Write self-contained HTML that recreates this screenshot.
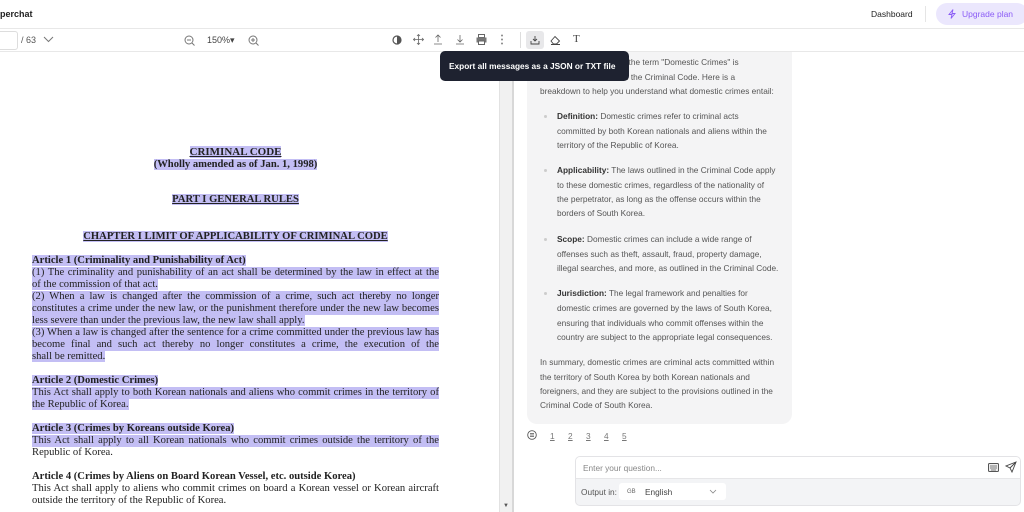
<!DOCTYPE html>
<html><head><meta charset="utf-8"><style>
*{margin:0;padding:0;box-sizing:border-box}
body{width:1024px;height:512px;overflow:hidden;background:#fff;font-family:"Liberation Sans",sans-serif;position:relative}
.a{position:absolute;white-space:nowrap}
.pl{position:absolute;left:32px;width:407px;font-family:"Liberation Serif",serif;font-size:10.6px;line-height:12px;height:12px;color:#222;white-space:nowrap;overflow:visible}
.j{text-align:justify;text-align-last:justify;white-space:normal}
.h{background:#c3bef4}
.c{position:absolute;font-size:8.3px;color:#555;line-height:12px;white-space:nowrap}
.c b{color:#333}
.dot{position:absolute;left:544px;width:3px;height:3px;border-radius:50%;background:#ccc}
svg{position:absolute}
</style></head><body>
<div class="a" style="left:0;top:9px;font-size:9px;font-weight:bold;color:#222">perchat</div>
<div class="a" style="left:871px;top:9px;font-size:8.5px;color:#222">Dashboard</div>
<div class="a" style="left:925px;top:6px;width:1px;height:16px;background:#e5e5e5"></div>
<div class="a" style="left:936px;top:3px;width:92px;height:22px;border-radius:11px;background:#ebe7fd"></div>
<div class="a" style="left:962px;top:9px;font-size:8.5px;color:#8b5cf6">Upgrade plan</div>
<svg style="left:947px;top:9px" width="10" height="10" viewBox="0 0 10 10"><path d="M6 0.5 L2 5.5 H5 L4 9.5 L8 4.5 H5 Z" fill="none" stroke="#8b5cf6" stroke-width="0.9"/></svg>
<div class="a" style="left:0;top:28px;width:1024px;height:1px;background:#e8e8e8"></div>
<div class="a" style="left:-4px;top:31px;width:22px;height:19px;border:1px solid #ddd;border-radius:3px"></div>
<div class="a" style="left:21px;top:35px;font-size:9px;color:#555">/ 63</div>
<svg style="left:43px;top:36px" width="11" height="7"><path d="M1 1 L5.5 5.5 L10 1" fill="none" stroke="#777"/></svg>
<svg style="left:184px;top:35px" width="11" height="11"><circle cx="5" cy="5" r="4" fill="none" stroke="#777"/><path d="M3 5H7M8 8L10.5 10.5" stroke="#777"/></svg>
<div class="a" style="left:207px;top:35px;font-size:9px;color:#444">150%▾</div>
<svg style="left:248px;top:35px" width="11" height="11"><circle cx="5" cy="5" r="4" fill="none" stroke="#777"/><path d="M3 5H7M5 3V7M8 8L10.5 10.5" stroke="#777"/></svg>
<svg style="left:392px;top:35px" width="10" height="10"><circle cx="5" cy="5" r="4" fill="none" stroke="#555" stroke-width="1.2"/><path d="M5 1A4 4 0 0 1 5 9Z" fill="#555"/></svg>
<svg style="left:413px;top:34px" width="11" height="11"><path d="M5.5 0.5V10.5M0.5 5.5H10.5M4 2L5.5 0.5 7 2M4 9L5.5 10.5 7 9M2 4L0.5 5.5 2 7M9 4L10.5 5.5 9 7" fill="none" stroke="#666" stroke-width="0.8"/></svg>
<svg style="left:433px;top:34px" width="10" height="11"><path d="M5 8V1M2.5 3.5L5 1 7.5 3.5M1 10H9" fill="none" stroke="#666" stroke-width="0.8"/></svg>
<svg style="left:455px;top:34px" width="10" height="11"><path d="M5 1V8M2.5 5.5L5 8 7.5 5.5M1 10H9" fill="none" stroke="#666" stroke-width="0.8"/></svg>
<svg style="left:476px;top:34px" width="11" height="11"><rect x="2.5" y="0.5" width="6" height="3" fill="none" stroke="#666"/><rect x="0.5" y="3.5" width="10" height="5" fill="#777"/><rect x="2.5" y="7" width="6" height="3.5" fill="#fff" stroke="#666"/></svg>
<svg style="left:500px;top:34px" width="4" height="11"><circle cx="2" cy="1.5" r="1" fill="#888"/><circle cx="2" cy="5.5" r="1" fill="#888"/><circle cx="2" cy="9.5" r="1" fill="#888"/></svg>
<div class="a" style="left:520px;top:32px;width:1px;height:16px;background:#ddd"></div>
<div class="a" style="left:526px;top:31px;width:18px;height:18px;border-radius:3px;background:#e8e8ea"></div>
<svg style="left:530px;top:35px" width="10" height="10"><path d="M5 1V6M3 4L5 6 7 4M1 6V9H9V6" fill="none" stroke="#444" stroke-width="0.9"/></svg>
<svg style="left:550px;top:35px" width="11" height="10"><path d="M1 6L5 1.5 9.5 6 6.5 9H3.5Z M1 9.5H10" fill="none" stroke="#444" stroke-width="0.9"/></svg>
<div class="a" style="left:573px;top:33px;font-family:'Liberation Serif',serif;font-size:11px;color:#444">T</div>
<div class="a" style="left:0;top:51px;width:1024px;height:1px;background:#e8e8e8"></div>
<div class="a" style="left:499px;top:52px;width:13px;height:460px;background:#f1f1f1;border-left:1px solid #e2e2e2"></div>
<div class="a" style="left:512px;top:52px;width:2px;height:460px;background:#d8d8d8"></div>
<div class="a" style="left:503px;top:503px;font-size:6px;color:#555">▼</div>
<div class="pl" style="top:146px;text-align:center;font-weight:bold;font-size:11px"><span class="h" style="text-decoration:underline">CRIMINAL CODE</span></div>
<div class="pl" style="top:159px;text-align:center;font-weight:bold"><span class="h">(Wholly amended as of Jan. 1, 1998)</span></div>
<div class="pl" style="top:194px;text-align:center;font-weight:bold"><span class="h" style="text-decoration:underline">PART I GENERAL RULES</span></div>
<div class="pl" style="top:231px;text-align:center;font-weight:bold"><span class="h" style="text-decoration:underline">CHAPTER I LIMIT OF APPLICABILITY OF CRIMINAL CODE</span></div>
<div class="pl" style="top:255px;font-weight:bold"><span class="h">Article 1 (Criminality and Punishability of Act)</span></div>
<div class="pl j h" style="top:267px">(1) The criminality and punishability of an act shall be determined by the law in effect at the time</div>
<div class="pl" style="top:279px"><span class="h">of the commission of that act.</span></div>
<div class="pl j h" style="top:291px">(2) When a law is changed after the commission of a crime, such act thereby no longer</div>
<div class="pl j h" style="top:303px">constitutes a crime under the new law, or the punishment therefore under the new law becomes</div>
<div class="pl" style="top:315px"><span class="h">less severe than under the previous law, the new law shall apply.</span></div>
<div class="pl j h" style="top:327px">(3) When a law is changed after the sentence for a crime committed under the previous law has</div>
<div class="pl j h" style="top:339px">become final and such act thereby no longer constitutes a crime, the execution of the punishment</div>
<div class="pl" style="top:351px"><span class="h">shall be remitted.</span></div>
<div class="pl" style="top:375px;font-weight:bold"><span class="h">Article 2 (Domestic Crimes)</span></div>
<div class="pl j h" style="top:387px">This Act shall apply to both Korean nationals and aliens who commit crimes in the territory of</div>
<div class="pl" style="top:399px"><span class="h">the Republic of Korea.</span></div>
<div class="pl" style="top:423px;font-weight:bold"><span class="h">Article 3 (Crimes by Koreans outside Korea)</span></div>
<div class="pl j h" style="top:435px">This Act shall apply to all Korean nationals who commit crimes outside the territory of the</div>
<div class="pl" style="top:447px">Republic of Korea.</div>
<div class="pl" style="top:471px;font-weight:bold">Article 4 (Crimes by Aliens on Board Korean Vessel, etc. outside Korea)</div>
<div class="pl j" style="top:483px">This Act shall apply to aliens who commit crimes on board a Korean vessel or Korean aircraft</div>
<div class="pl" style="top:495px">outside the territory of the Republic of Korea.</div>
<div class="a" style="left:527px;top:52px;width:265px;height:372px;background:#f4f4f5;border-radius:0 0 10px 10px"></div>
<div class="c" style="left:540px;top:56px">In the context provided, the term "Domestic Crimes" is</div>
<div class="c" style="left:540px;top:71px">mentioned in Article 2 of the Criminal Code. Here is a</div>
<div class="c" style="left:540px;top:85px">breakdown to help you understand what domestic crimes entail:</div>
<div class="dot" style="top:115px"></div>
<div class="c" style="left:557px;top:110px"><b>Definition:</b> Domestic crimes refer to criminal acts</div>
<div class="c" style="left:557px;top:125px">committed by both Korean nationals and aliens within the</div>
<div class="c" style="left:557px;top:139px">territory of the Republic of Korea.</div>
<div class="dot" style="top:169px"></div>
<div class="c" style="left:557px;top:164px"><b>Applicability:</b> The laws outlined in the Criminal Code apply</div>
<div class="c" style="left:557px;top:179px">to these domestic crimes, regardless of the nationality of</div>
<div class="c" style="left:557px;top:193px">the perpetrator, as long as the offense occurs within the</div>
<div class="c" style="left:557px;top:207px">borders of South Korea.</div>
<div class="dot" style="top:238px"></div>
<div class="c" style="left:557px;top:233px"><b>Scope:</b> Domestic crimes can include a wide range of</div>
<div class="c" style="left:557px;top:248px">offenses such as theft, assault, fraud, property damage,</div>
<div class="c" style="left:557px;top:262px">illegal searches, and more, as outlined in the Criminal Code.</div>
<div class="dot" style="top:292px"></div>
<div class="c" style="left:557px;top:287px"><b>Jurisdiction:</b> The legal framework and penalties for</div>
<div class="c" style="left:557px;top:302px">domestic crimes are governed by the laws of South Korea,</div>
<div class="c" style="left:557px;top:317px">ensuring that individuals who commit offenses within the</div>
<div class="c" style="left:557px;top:331px">country are subject to the appropriate legal consequences.</div>
<div class="c" style="left:540px;top:356px">In summary, domestic crimes are criminal acts committed within</div>
<div class="c" style="left:540px;top:371px">the territory of South Korea by both Korean nationals and</div>
<div class="c" style="left:540px;top:385px">foreigners, and they are subject to the provisions outlined in the</div>
<div class="c" style="left:540px;top:399px">Criminal Code of South Korea.</div>
<svg style="left:527px;top:430px" width="10" height="10"><circle cx="5" cy="5" r="4.3" fill="none" stroke="#555" stroke-width="0.9"/><path d="M3 3.5H7M3 5H7M3 6.5H7" stroke="#555" stroke-width="0.8"/></svg>
<div class="c" style="left:550px;top:430px;color:#777;text-decoration:underline">1</div>
<div class="c" style="left:568px;top:430px;color:#777;text-decoration:underline">2</div>
<div class="c" style="left:586px;top:430px;color:#777;text-decoration:underline">3</div>
<div class="c" style="left:604px;top:430px;color:#777;text-decoration:underline">4</div>
<div class="c" style="left:622px;top:430px;color:#777;text-decoration:underline">5</div>
<div class="a" style="left:575px;top:456px;width:446px;height:50px;border:1px solid #e3e3e6;border-radius:5px;background:#f3f4f6;overflow:hidden">
<div style="position:absolute;left:0;top:0;width:100%;height:22px;background:#fff;border-bottom:1px solid #e6e6e8"></div>
</div>
<div class="c" style="left:583px;top:462px;color:#888">Enter your question...</div>
<svg style="left:988px;top:463px" width="11" height="9"><rect x="0.5" y="0.5" width="10" height="8" rx="1" fill="#eee" stroke="#555"/><path d="M2 3H9M2 5H9M3 7H8" stroke="#555" stroke-width="0.7"/></svg>
<svg style="left:1005px;top:461px" width="12" height="12"><path d="M11 1L1 5 5 7 7 11Z M5 7L11 1" fill="none" stroke="#444" stroke-width="0.9"/></svg>
<div class="c" style="left:581px;top:486px;color:#555">Output in:</div>
<div class="a" style="left:619px;top:483px;width:107px;height:17px;background:#fff;border-radius:3px"></div>
<div class="a" style="left:627px;top:489px;font-size:6px;color:#666">GB</div>
<div class="c" style="left:645px;top:486px;color:#444">English</div>
<svg style="left:709px;top:489px" width="8" height="5"><path d="M1 1L4 4 7 1" fill="none" stroke="#888" stroke-width="0.8"/></svg>
<div class="a" style="left:440px;top:51px;width:189px;height:30px;background:#1e2230;border-radius:5px"></div>
<div class="a" style="left:449px;top:61px;font-size:8.3px;font-weight:bold;color:#fff">Export all messages as a JSON or TXT file</div>
</body></html>
